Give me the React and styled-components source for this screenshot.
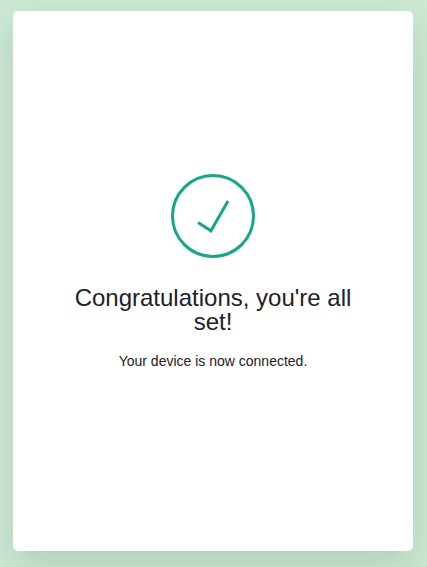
import React from "react";
import styled, { createGlobalStyle } from "styled-components";

const GlobalStyle = createGlobalStyle`
  * { box-sizing: border-box; }
  body { margin: 0; background: #cbe9d3; font-family: "Liberation Sans", Arial, sans-serif; }
`;

const Page = styled.main`
  height: 567px;
  padding: 11px 14px 16px 13px;
  overflow: hidden;
`;

const Card = styled.section`
  width: 400px;
  height: 540px;
  padding: 163px 60px 0;
  display: flex;
  flex-direction: column;
  align-items: center;
  text-align: center;
  color: #21212b;
  background: #fff;
  border-radius: 5px;
  box-shadow: 0 14px 40px rgba(0, 0, 0, 0.12);
`;

const CheckIcon = styled.svg`
  display: block;
  flex: none;
  width: 84px;
  height: 84px;
`;

const Title = styled.h1`
  margin: 28px 0 0;
  font-size: 24px;
  line-height: 24px;
  font-weight: 400;
`;

const Message = styled.p`
  margin: 17px 0 0;
  font-size: 14px;
  line-height: 20px;
`;

export default function App() {
  return (
    <>
      <GlobalStyle />
      <Page>
        <Card>
          <CheckIcon viewBox="0 0 84 84" fill="none" stroke="#16a78a" strokeWidth="3" aria-hidden="true">
            <circle cx="42" cy="42" r="40.5" />
            <path d="M27 48.4L39.9 56.8L57 27" />
          </CheckIcon>
          <Title>Congratulations, you're all set!</Title>
          <Message>Your device is now connected.</Message>
        </Card>
      </Page>
    </>
  );
}
